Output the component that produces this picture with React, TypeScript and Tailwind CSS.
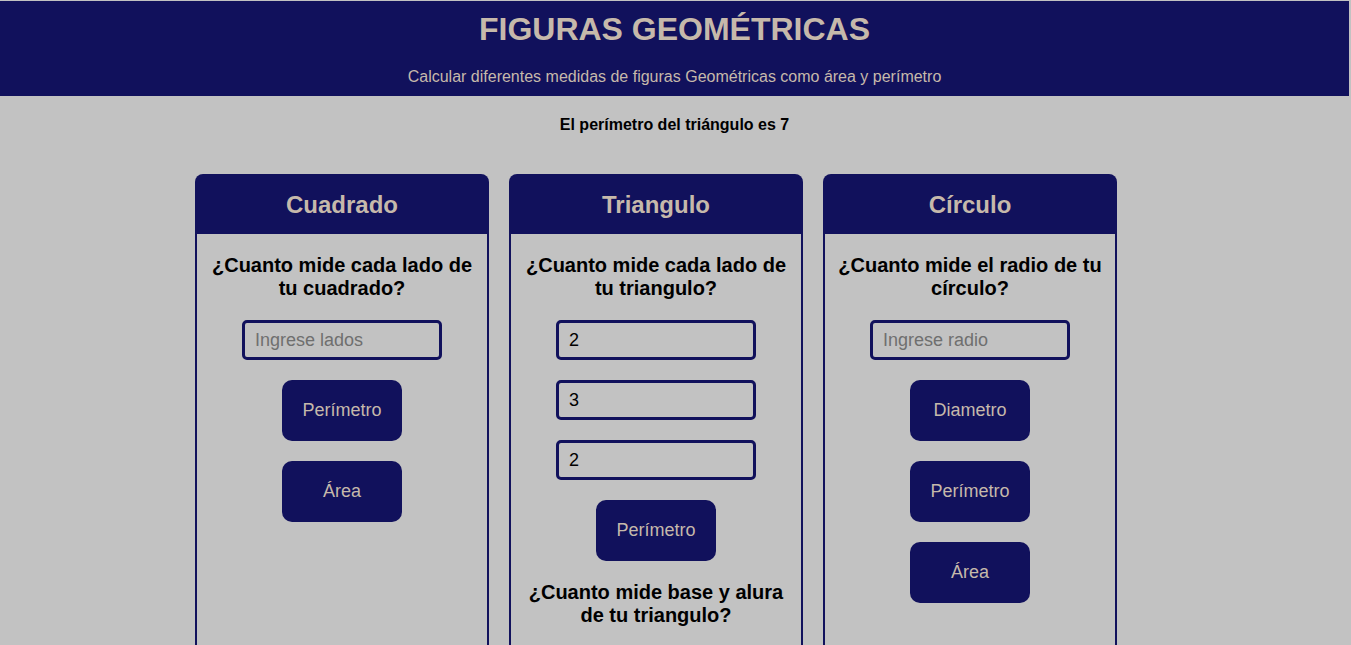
import React from "react";

const NAVY = "bg-[#11115c]";

function Card({ title, children }: { title: string; children: React.ReactNode }) {
  return (
    <div className="w-[294px] h-[520px] flex flex-col rounded-t-[8px] overflow-hidden">
      <div className={`${NAVY} h-[60px] flex items-center justify-center pt-[2px]`}>
        <h2 className="text-[24px] font-bold text-[#c6b9ab] leading-[28px]">{title}</h2>
      </div>
      <div className="flex-1 border-x-2 border-b-2 border-[#11115c] px-[10px] pt-[20px] pb-[20px] flex flex-col items-center gap-[20px]">
        {children}
      </div>
    </div>
  );
}

function Question({ children }: { children: React.ReactNode }) {
  return <p className="text-[20px] font-bold leading-[23px] text-black text-center">{children}</p>;
}

function Input({ placeholder, value }: { placeholder: string; value?: string }) {
  return (
    <input
      className="w-[200px] h-[40px] shrink-0 border-[3px] border-[#11115c] rounded-[5px] bg-transparent pl-[10px] text-[18px] text-black placeholder:text-[#6f6f6f] outline-none"
      placeholder={placeholder}
      defaultValue={value}
    />
  );
}

function Btn({ children }: { children: React.ReactNode }) {
  return (
    <button className={`${NAVY} w-[120px] h-[61px] shrink-0 rounded-[10px] text-[18px] text-[#c6b9ab]`}>{children}</button>
  );
}

export default function App() {
  return (
    <div
      className="h-screen overflow-hidden bg-[#c2c2c2] pt-[1px]"
      style={{ fontFamily: '"Liberation Sans", Arial, sans-serif' }}
    >
      <header className={`${NAVY} w-[1349px] h-[95px] flex flex-col items-center pt-[10px]`}>
        <h1 className="text-[32px] font-bold leading-[37px] text-[#c6b9ab]">FIGURAS GEOMÉTRICAS</h1>
        <p className="mt-[20px] text-[16px] leading-[18px] text-[#c6b9ab]">
          Calcular diferentes medidas de figuras Geométricas como área y perímetro
        </p>
      </header>
      <p className="mt-[20px] text-center text-[16px] font-bold leading-[18px] text-black pr-[2px]">
        El perímetro del triángulo es 7
      </p>
      <main className="mt-[40px] flex gap-[20px] pl-[195px]">
        <Card title="Cuadrado">
          <Question>¿Cuanto mide cada lado de tu cuadrado?</Question>
          <Input placeholder="Ingrese lados" />
          <Btn>Perímetro</Btn>
          <Btn>Área</Btn>
        </Card>
        <Card title="Triangulo">
          <Question>¿Cuanto mide cada lado de tu triangulo?</Question>
          <Input placeholder="Lado 1" value="2" />
          <Input placeholder="Lado 2" value="3" />
          <Input placeholder="Base" value="2" />
          <Btn>Perímetro</Btn>
          <Question>¿Cuanto mide base y alura de tu triangulo?</Question>
        </Card>
        <Card title="Círculo">
          <Question>¿Cuanto mide el radio de tu círculo?</Question>
          <Input placeholder="Ingrese radio" />
          <Btn>Diametro</Btn>
          <Btn>Perímetro</Btn>
          <Btn>Área</Btn>
        </Card>
      </main>
    </div>
  );
}
